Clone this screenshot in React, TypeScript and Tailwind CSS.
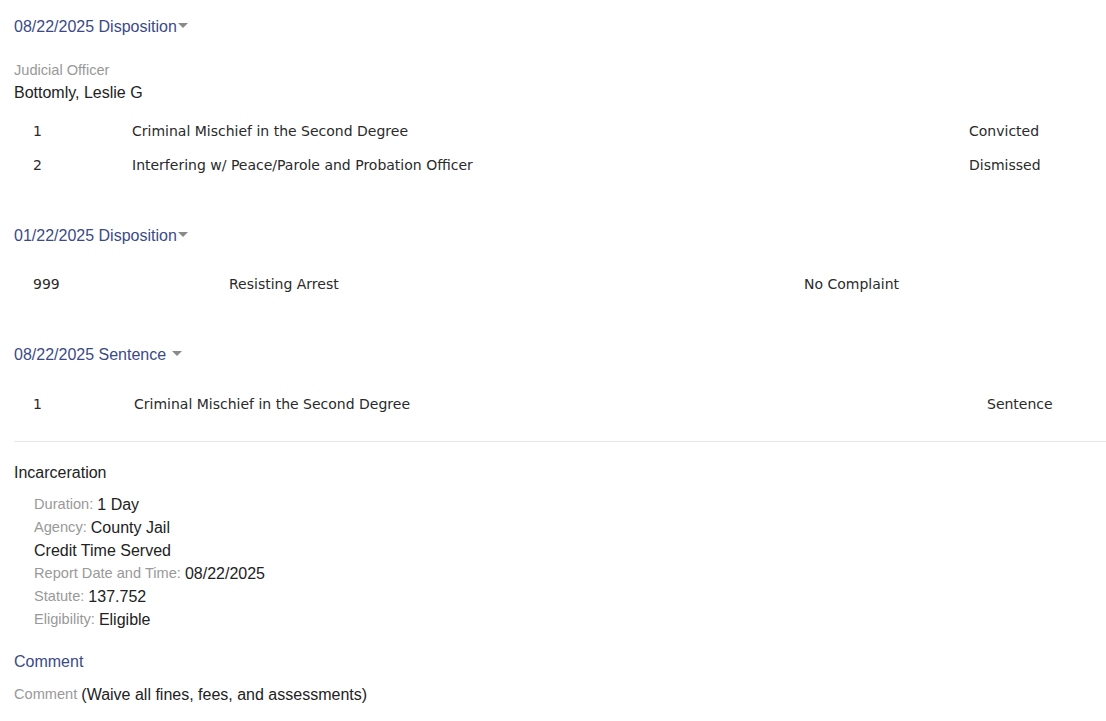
import React from "react";

const Caret = () => (
  <svg width="10" height="6" viewBox="0 0 10 6" className="inline-block ml-[1px] mb-[3px]">
    <path d="M0 0 L10 0 L5 5 Z" fill="#8a8a8a" />
  </svg>
);

const Heading = ({ children, space }: { children: React.ReactNode; space?: boolean }) => (
  <div className="text-[16px] leading-[20px] text-[#3b4a87]">
    {children}
    {space ? <span>&nbsp;</span> : null}
    <Caret />
  </div>
);

const Row = ({ cols, widths }: { cols: string[]; widths: string }) => (
  <div className={`grid ${widths} h-[34px] items-center text-[14px] text-[#2a2a2a]`} style={{ fontFamily: '"DejaVu Sans", Verdana, sans-serif' }}>
    {cols.map((c, i) => (
      <div key={i}>{c}</div>
    ))}
  </div>
);

const Field = ({ label, value }: { label?: string; value: string }) => (
  <div className="h-[23px] flex items-center">
    {label ? <span className="text-[14.6px] text-[#999]">{label}:&nbsp;</span> : null}
    <span className="text-[16px] text-[#222]">{value}</span>
  </div>
);

export default function App() {
  return (
    <div className="bg-white w-[1106px] h-[721px] overflow-hidden pl-[14px]" style={{ fontFamily: '"Liberation Sans", Arial, sans-serif' }}>
      <div className="pt-[17px]">
        <Heading>08/22/2025 Disposition</Heading>
      </div>
      <div className="mt-[23px] text-[14.6px] leading-[20px] text-[#999]">Judicial Officer</div>
      <div className="mt-[3px] text-[16px] leading-[20px] text-[#222]">Bottomly, Leslie G</div>
      <div className="mt-[11px] pl-[19px]">
        <Row cols={["1", "Criminal Mischief in the Second Degree", "Convicted"]} widths="grid-cols-[99px_837px_1fr]" />
        <Row cols={["2", "Interfering w/ Peace/Parole and Probation Officer", "Dismissed"]} widths="grid-cols-[99px_837px_1fr]" />
      </div>
      <div className="mt-[44px]">
        <Heading>01/22/2025 Disposition</Heading>
      </div>
      <div className="mt-[21px] pl-[19px]">
        <Row cols={["999", "Resisting Arrest", "No Complaint"]} widths="grid-cols-[196px_575px_1fr]" />
      </div>
      <div className="mt-[44px]">
        <Heading space>08/22/2025 Sentence</Heading>
      </div>
      <div className="mt-[22px] pl-[19px]">
        <Row cols={["1", "Criminal Mischief in the Second Degree", "Sentence"]} widths="grid-cols-[101px_853px_1fr]" />
      </div>
      <div className="mt-[20px] border-t border-[#e6e6e6]" />
      <div className="mt-[21px] text-[16px] leading-[20px] text-[#222]">Incarceration</div>
      <div className="mt-[10px] pl-[20px]">
        <Field label="Duration" value="1 Day" />
        <Field label="Agency" value="County Jail" />
        <Field value="Credit Time Served" />
        <Field label="Report Date and Time" value="08/22/2025" />
        <Field label="Statute" value="137.752" />
        <Field label="Eligibility" value="Eligible" />
      </div>
      <div className="mt-[21px] text-[16px] leading-[20px] text-[#3b4a87]">Comment</div>
      <div className="mt-[11px] flex items-center">
        <span className="text-[14.6px] text-[#999]">Comment&nbsp;</span>
        <span className="text-[16px] text-[#222]">(Waive all fines, fees, and assessments)</span>
      </div>
    </div>
  );
}
